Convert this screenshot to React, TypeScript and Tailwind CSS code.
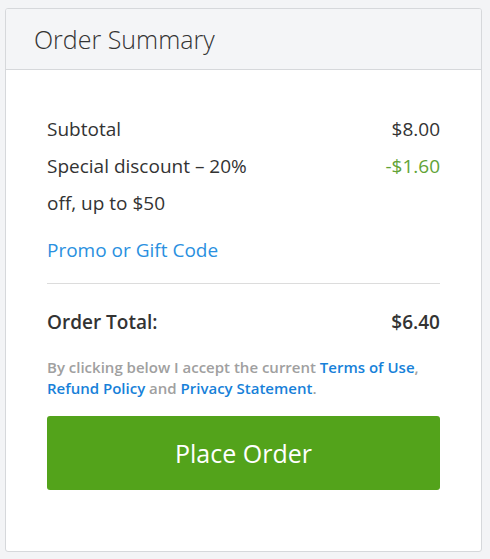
import React from 'react';

const App: React.FC = () => {
  return (
    <div className="min-h-screen bg-[#f3f4f6] pt-2 pl-[5px] pr-[8px] pb-2 font-['Open_Sans',sans-serif]">
      <div className="bg-white border border-[#d6d8db] rounded-[3px] overflow-hidden">
        <div className="bg-[#f4f5f7] border-b border-[#d6d8db] h-[61px] flex items-center px-7">
          <h2 className="text-[25px] font-light text-[#333] leading-none">Order Summary</h2>
        </div>

        <div className="px-[41px] pt-[41px] pb-[61px] text-[19px] text-[#333]">
          <div className="flex justify-between leading-[37px]">
            <span>Subtotal</span>
            <span>$8.00</span>
          </div>
          <div className="flex justify-between leading-[37px]">
            <span className="w-[225px]">Special discount – 20% off, up to $50</span>
            <span className="text-[#62a336]">-$1.60</span>
          </div>

          <div className="mt-[10px] leading-[37px]">
            <a href="#" className="text-[#2a90e0]">Promo or Gift Code</a>
          </div>

          <div className="mt-[14px] border-t border-[#dcdcdc]" />

          <div className="mt-5 flex justify-between leading-[37px] font-semibold">
            <span>Order Total:</span>
            <span>$6.40</span>
          </div>

          <p className="mt-4 text-[15px] leading-[21px] font-semibold text-[#a0a0a0]">
            By clicking below I accept the current{' '}
            <a href="#" className="text-[#1781d9]">Terms of Use</a>,{' '}
            <a href="#" className="text-[#1781d9]">Refund Policy</a> and{' '}
            <a href="#" className="text-[#1781d9]">Privacy Statement</a>.
          </p>

          <button className="mt-[17px] w-full h-[74px] rounded-[3px] bg-[#53a31b] text-white text-[25px] pt-[2px]">
            Place Order
          </button>
        </div>
      </div>
    </div>
  );
};

export default App;
